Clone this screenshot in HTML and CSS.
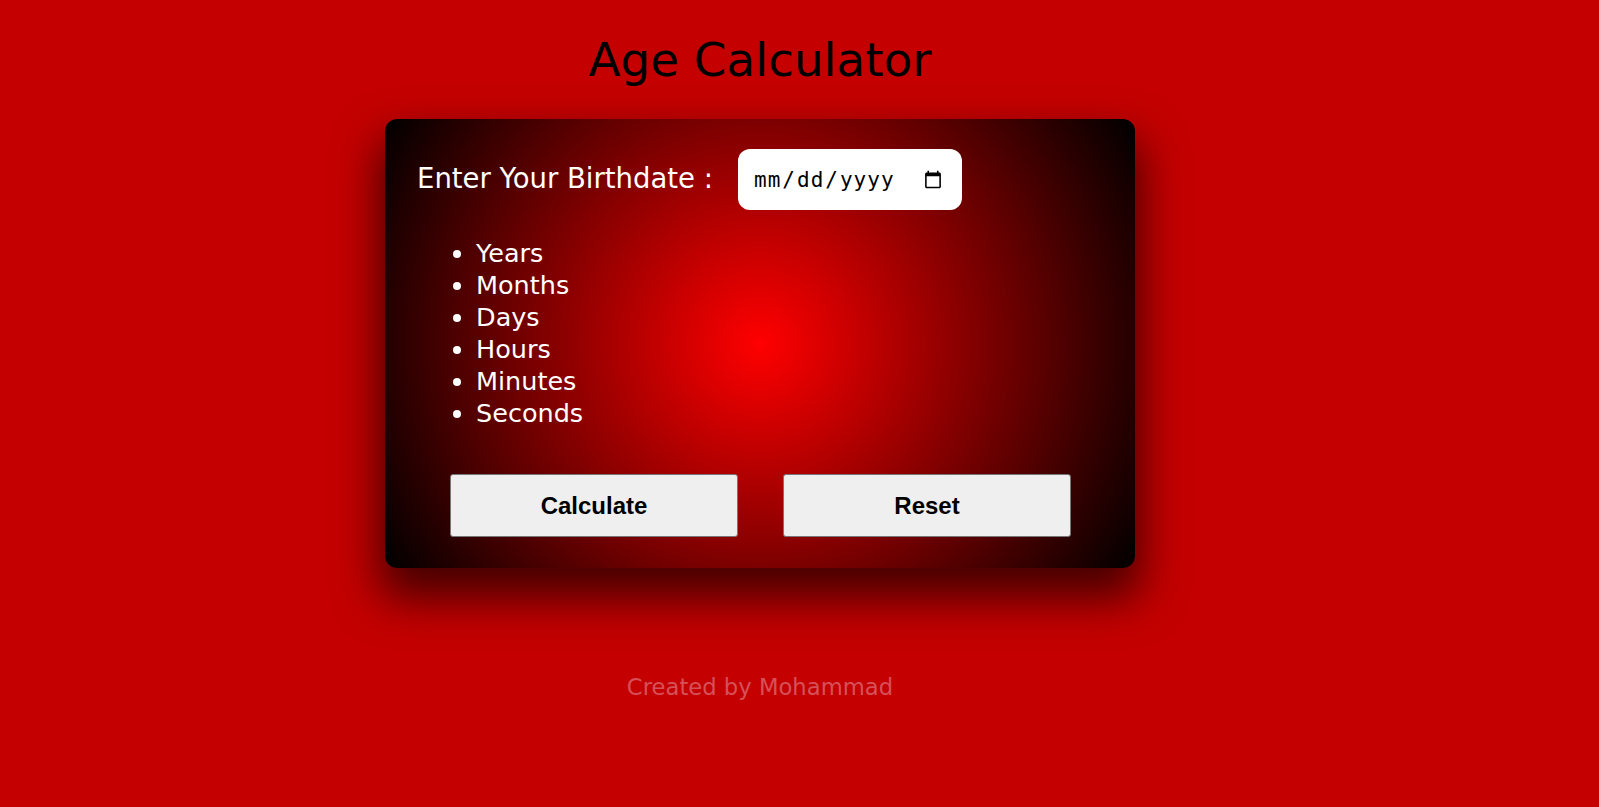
FILE: index.html
```html
<!DOCTYPE html>
<html lang="en">
<head>
<meta charset="utf-8">
<title>Age Calculator</title>
<link rel="stylesheet" href="styles.css">
</head>
<body>
<main class="page">
  <h1 class="title">Age Calculator</h1>
  <section class="card">
    <div class="row">
      <label class="label" for="birth">Enter Your Birthdate :</label>
      <input class="date" id="birth" type="date">
    </div>
    <ul class="units">
      <li>Years</li>
      <li>Months</li>
      <li>Days</li>
      <li>Hours</li>
      <li>Minutes</li>
      <li>Seconds</li>
    </ul>
    <div class="actions">
      <button class="btn" type="button">Calculate</button>
      <button class="btn" type="button">Reset</button>
    </div>
  </section>
  <footer class="credit">Created by Mohammad</footer>
</main>
</body>
</html>
```

FILE: styles.css
```css
* { box-sizing: border-box; }
html, body { margin: 0; padding: 0; }
body {
  background: #c40000;
  font-family: "DejaVu Sans", Verdana, sans-serif;
  min-height: 807px;
}
.page {
  display: flex;
  flex-direction: column;
  align-items: center;
  padding-right: 79px;
}
.title {
  margin: 33px 0 32px;
  font-size: 46.8px;
  font-weight: 400;
  color: #000;
  line-height: normal;
}
.card {
  width: 750px;
  height: 449px;
  padding: 30px 30px 31px;
  border-radius: 12px;
  background: radial-gradient(circle, #ff0000 0%, #000 100%);
  box-shadow: 0 25px 45px 5px rgba(0,0,0,0.65);
  display: flex;
  flex-direction: column;
}
.row {
  display: flex;
  align-items: center;
  gap: 25px;
  padding-left: 2px;
}
.label {
  color: #fff;
  font-size: 27.5px;
  margin-bottom: 3px;
}
.date {
  width: 224px;
  height: 61px;
  border: none;
  border-radius: 12px;
  background: #fff;
  padding: 0 17px 0 15px;
  font-family: "DejaVu Sans Mono", monospace;
  font-size: 21px;
  letter-spacing: 1px;
  color: #000;
}
.date::-webkit-calendar-picker-indicator {
  width: 20px;
  height: 20px;
}
.units {
  margin: 27px 0 0;
  padding-left: 61px;
  color: #fff;
  font-size: 25.5px;
  line-height: 32px;
}
.actions {
  margin-top: auto;
  display: flex;
  justify-content: space-between;
  padding: 0 34px 0 35px;
}
.btn {
  width: 288px;
  height: 63px;
  background: #efefef;
  border: 1px solid #767676;
  border-radius: 3px;
  font-family: "Liberation Sans", Arial, sans-serif;
  font-weight: 700;
  font-size: 24px;
  color: #000;
}
.credit {
  margin-top: 106px;
  font-size: 22.7px;
  line-height: normal;
  color: #d6505a;
}
```
